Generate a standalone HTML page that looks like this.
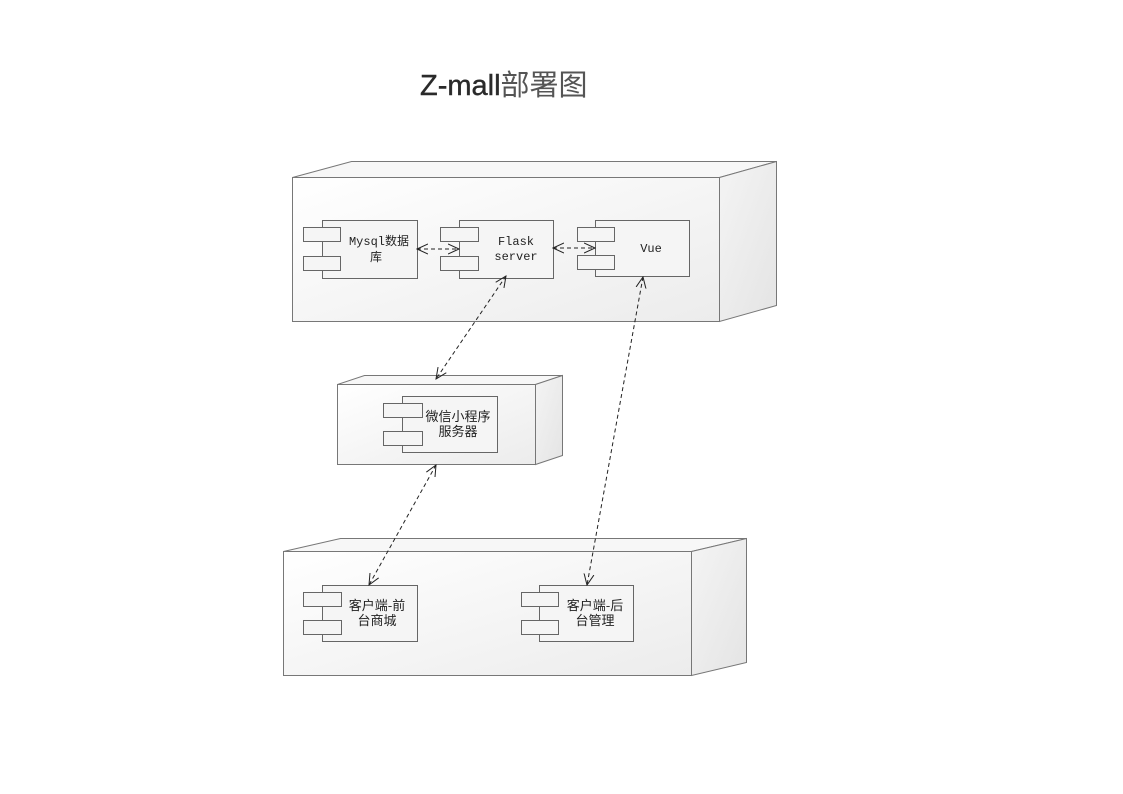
<!DOCTYPE html>
<html><head><meta charset="utf-8"><style>
html,body{margin:0;padding:0;background:#fff;}
svg{display:block;}
</style></head><body>
<svg width="1123" height="794" xmlns="http://www.w3.org/2000/svg">
<defs>
<linearGradient id="g" x1="0" y1="0" x2="1" y2="1">
<stop offset="0" stop-color="#ffffff"/><stop offset="1" stop-color="#ececec"/>
</linearGradient>
<linearGradient id="g2" x1="0" y1="0" x2="1" y2="1">
<stop offset="0" stop-color="#f4f4f4"/><stop offset="1" stop-color="#e4e4e4"/>
</linearGradient>
<marker id="a" viewBox="0 0 12 12" refX="11" refY="6" markerWidth="12" markerHeight="12" markerUnits="userSpaceOnUse" orient="auto-start-reverse">
<path d="M0,1 L11,6 L0,11" fill="none" stroke="#222" stroke-width="1"/>
</marker>
</defs>
<text x="420" y="95" font-family="Liberation Sans, Noto Sans CJK SC, sans-serif" font-size="29" fill="#2a2a2a" stroke="#2a2a2a" stroke-width="0.4">Z-mall<tspan fill="#555" stroke="none">部署图</tspan></text>

<g stroke="#777" stroke-width="1">
<polygon points="292.5,177.5 351.5,161.5 776.5,161.5 719.5,177.5" fill="#f7f7f7"/>
<polygon points="719.5,177.5 776.5,161.5 776.5,305.5 719.5,321.5" fill="url(#g2)"/>
<rect x="292.5" y="177.5" width="427" height="144" fill="url(#g)"/>
<polygon points="337.5,384.5 364.5,375.5 562.5,375.5 535.5,384.5" fill="#f7f7f7"/>
<polygon points="535.5,384.5 562.5,375.5 562.5,455.5 535.5,464.5" fill="url(#g2)"/>
<rect x="337.5" y="384.5" width="198" height="80" fill="url(#g)"/>
<polygon points="283.5,551.5 340.5,538.5 746.5,538.5 691.5,551.5" fill="#f7f7f7"/>
<polygon points="691.5,551.5 746.5,538.5 746.5,662.5 691.5,675.5" fill="url(#g2)"/>
<rect x="283.5" y="551.5" width="408" height="124" fill="url(#g)"/>
</g>

<g stroke="#666" stroke-width="1" fill="#f5f5f5">
<rect x="322.5" y="220.5" width="95" height="58"/><rect x="303.5" y="227.5" width="37" height="14"/><rect x="303.5" y="256.5" width="37" height="14"/>
<rect x="459.5" y="220.5" width="94" height="58"/><rect x="440.5" y="227.5" width="38" height="14"/><rect x="440.5" y="256.5" width="38" height="14"/>
<rect x="595.5" y="220.5" width="94" height="56"/><rect x="577.5" y="227.5" width="37" height="14"/><rect x="577.5" y="255.5" width="37" height="14"/>
<rect x="402.5" y="396.5" width="95" height="56"/><rect x="383.5" y="403.5" width="39" height="14"/><rect x="383.5" y="431.5" width="39" height="14"/>
<rect x="322.5" y="585.5" width="95" height="56"/><rect x="303.5" y="592.5" width="38" height="14"/><rect x="303.5" y="620.5" width="38" height="14"/>
<rect x="539.5" y="585.5" width="94" height="56"/><rect x="521.5" y="592.5" width="37" height="14"/><rect x="521.5" y="620.5" width="37" height="14"/>
</g>

<g font-family="Liberation Mono, Noto Sans CJK SC, monospace" font-size="12" fill="#222" text-anchor="middle">
<text x="379" y="245">Mysql数据</text><text x="376" y="261">库</text>
<text x="516" y="245">Flask</text><text x="516" y="260">server</text>
<text x="651" y="252">Vue</text>
</g>
<g font-family="Noto Sans CJK SC, sans-serif" font-size="13" fill="#222" text-anchor="middle">
<text x="458" y="421">微信小程序</text><text x="458" y="436">服务器</text>
<text x="377" y="610">客户端-前</text><text x="377" y="625">台商城</text>
<text x="595" y="610">客户端-后</text><text x="595" y="625">台管理</text>
</g>

<g stroke="#222" stroke-width="1" stroke-dasharray="4,3" fill="none" marker-start="url(#a)" marker-end="url(#a)">
<line x1="417" y1="249" x2="459" y2="249"/>
<line x1="553" y1="248" x2="595" y2="248"/>
<line x1="506" y1="276" x2="436" y2="379"/>
<line x1="436" y1="465" x2="369" y2="585"/>
<line x1="643" y1="277" x2="587" y2="585"/>
</g>
</svg>
</body></html>
